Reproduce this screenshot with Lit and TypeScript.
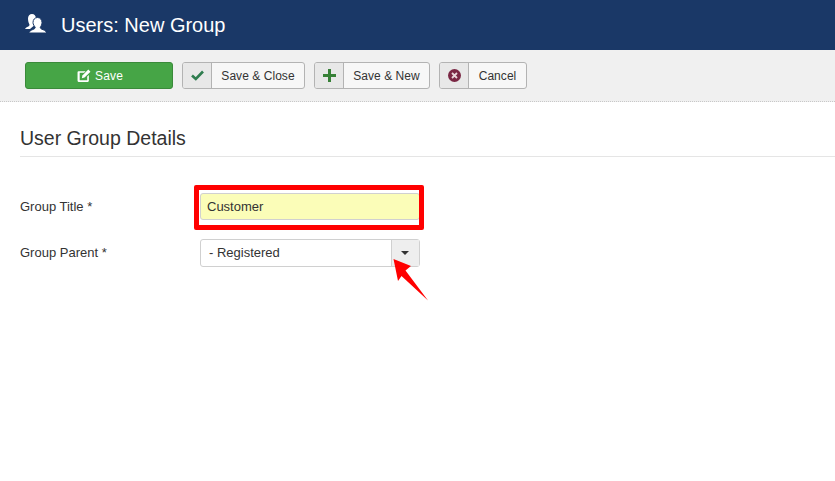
import { LitElement, html, css } from "lit";
import { customElement } from "lit/decorators.js";

@customElement("app-root")
export class AppRoot extends LitElement {
  static styles = css`
    :host {
      display: block;
      position: relative;
      width: 835px;
      height: 481px;
      overflow: hidden;
      background: #fff;
      font-family: "Liberation Sans", Arial, sans-serif;
      color: #333;
      font-size: 13px;
    }
    .header {
      height: 50px;
      background: #1a3867;
      display: flex;
      align-items: center;
      padding-left: 25px;
      gap: 15px;
      color: #fff;
      font-size: 20px;
      box-sizing: border-box;
    }
    .header svg { display: block; margin-bottom: 2px; }
    .toolbar {
      height: 52px;
      box-sizing: border-box;
      background: #f0f0f0;
      border-bottom: 1px dotted #c8c8c8;
      display: flex;
      align-items: center;
      gap: 9px;
      padding: 0 0 0 25px;
    }
    .btn {
      height: 27px;
      box-sizing: border-box;
      display: flex;
      align-items: stretch;
      background: #f7f7f7;
      border: 1px solid #b3b3b3;
      border-radius: 3px;
      font-size: 12px;
      color: #333;
      letter-spacing: 0.05px;
    }
    .btn .ic {
      width: 28px;
      background: #e8e8e8;
      border-right: 1px solid #b3b3b3;
      display: flex;
      align-items: center;
      justify-content: center;
      border-radius: 2px 0 0 2px;
    }
    .btn .lb {
      flex: 1;
      display: flex;
      align-items: center;
      justify-content: center;
    }
    .save {
      width: 148px;
      background: #46a546;
      border-color: #3a8a3a;
      color: #fff;
      justify-content: center;
      align-items: center;
      gap: 4px;
      padding-left: 2px;
      letter-spacing: 0.2px;
    }
    .close { width: 123px; }
    .new { width: 116px; }
    .cancel { width: 88px; }
    .content { padding: 26px 0 0 20px; }
    h2 {
      margin: 0;
      font-weight: 400;
      font-size: 19.5px;
      line-height: 20px;
      color: #333;
      padding-bottom: 8px;
      border-bottom: 1px solid #e5e5e5;
      height: 20px;
    }
    .rows {
      margin-top: 36px;
      display: flex;
      flex-direction: column;
      gap: 19px;
    }
    .row { display: flex; align-items: center; }
    .row label { width: 180px; font-size: 13px; margin-top: -1px; }
    .input {
      width: 220px;
      height: 27px;
      box-sizing: border-box;
      background: #fbfdb8;
      border: 1px solid #d0d0d0;
      border-radius: 3px;
      padding-left: 6px;
      display: flex;
      align-items: center;
      font-size: 13px;
    }
    .select {
      width: 220px;
      height: 28px;
      box-sizing: border-box;
      background: #fff;
      border: 1px solid #d0d0d0;
      border-radius: 3px;
      display: flex;
      font-size: 13px;
    }
    .select .val { flex: 1; padding: 0 0 2px 8px; display: flex; align-items: center; }
    .select .drop {
      width: 27px;
      background: #eee;
      border-left: 1px solid #d0d0d0;
      display: flex;
      align-items: center;
      justify-content: center;
    }
    .caret {
      width: 0;
      height: 0;
      border-left: 4px solid transparent;
      border-right: 4px solid transparent;
      border-top: 4px solid #333;
      margin-left: -2px;
    }
    .redbox {
      position: absolute;
      left: 194px;
      top: 185px;
      width: 230px;
      height: 45px;
      box-sizing: border-box;
      border: 5px solid #f00;
      border-radius: 2px;
      pointer-events: none;
    }
    .arrow { position: absolute; left: 385px; top: 255px; }
  `;

  render() {
    return html`
      <div class="header">
        <svg width="21" height="20" viewBox="0 0 21 20">
          <path fill="#fff" d="M7 0c2.300 0 4 1.800 4 4.500 0 1.800-.8 3.200-1.500 4.200 0 .8.200 1.300.8 1.800L5 15H0c.5-1.500 2-2 3.200-2.600.8-.4 1.300-.8 1.300-1.700C3.700 9 3 7 3 4.500 3 1.800 4.700 0 7 0z"/>
          <path fill="#fff" stroke="#1a3867" stroke-width="1" d="M12.500 3.500c2.700 0 4.500 2.200 4.500 5 0 2-.8 3.500-1.700 4.700 0 1 .5 1.500 1.500 2 1.600.7 3.700 1 4.700 3.300v.5H4v-.5c1-2.300 3.100-2.600 4.700-3.300 1-.5 1.500-1 1.500-2C9.300 12 8 10.500 8 8.500c0-2.800 1.800-5 4.500-5z"/>
        </svg>
        <span>Users: New Group</span>
      </div>
      <div class="toolbar">
        <div class="btn save">
          <svg width="14" height="14" viewBox="0 0 13 13">
            <path fill="#fff" d="M1.500 2H8L6.500 3.500H2.500v7h7V7L11 5.500v5.500a1 1 0 0 1-1 1H1.500a1 1 0 0 1-1-1V3a1 1 0 0 1 1-1z"/>
            <path fill="#fff" d="M10.500 .5l2 2L7 8 4.500 8.500 5 6z"/>
          </svg>
          <span>Save</span>
        </div>
        <div class="btn close">
          <span class="ic">
            <svg width="13" height="11" viewBox="0 0 13 11"><path fill="none" stroke="#2f7d4f" stroke-width="2.600" d="M1 5.500l3.800 3.500L12 1.500"/></svg>
          </span>
          <span class="lb">Save &amp; Close</span>
        </div>
        <div class="btn new">
          <span class="ic">
            <svg width="13" height="13" viewBox="0 0 13 13"><path fill="#378137" d="M5 0h3v5h5v3H8v5H5V8H0V5h5z"/></svg>
          </span>
          <span class="lb">Save &amp; New</span>
        </div>
        <div class="btn cancel">
          <span class="ic">
            <svg width="13" height="13" viewBox="0 0 13 13">
              <circle cx="6.500" cy="6.500" r="6.500" fill="#7a2744"/>
              <path stroke="#e8d5da" stroke-width="1.800" d="M4 4l5 5M9 4l-5 5"/>
            </svg>
          </span>
          <span class="lb">Cancel</span>
        </div>
      </div>
      <div class="content">
        <h2>User Group Details</h2>
        <div class="rows">
          <div class="row">
            <label>Group Title *</label>
            <div class="input">Customer</div>
          </div>
          <div class="row">
            <label>Group Parent *</label>
            <div class="select">
              <span class="val">- Registered</span>
              <span class="drop"><span class="caret"></span></span>
            </div>
          </div>
        </div>
      </div>
      <div class="redbox"></div>
      <svg class="arrow" width="46" height="48" viewBox="385 255 46 48">
        <path fill="#f00" d="M393.500 259L411 266l-5.500 4.500L428 300.500 401.500 276 398 281z"/>
      </svg>
    `;
  }
}
